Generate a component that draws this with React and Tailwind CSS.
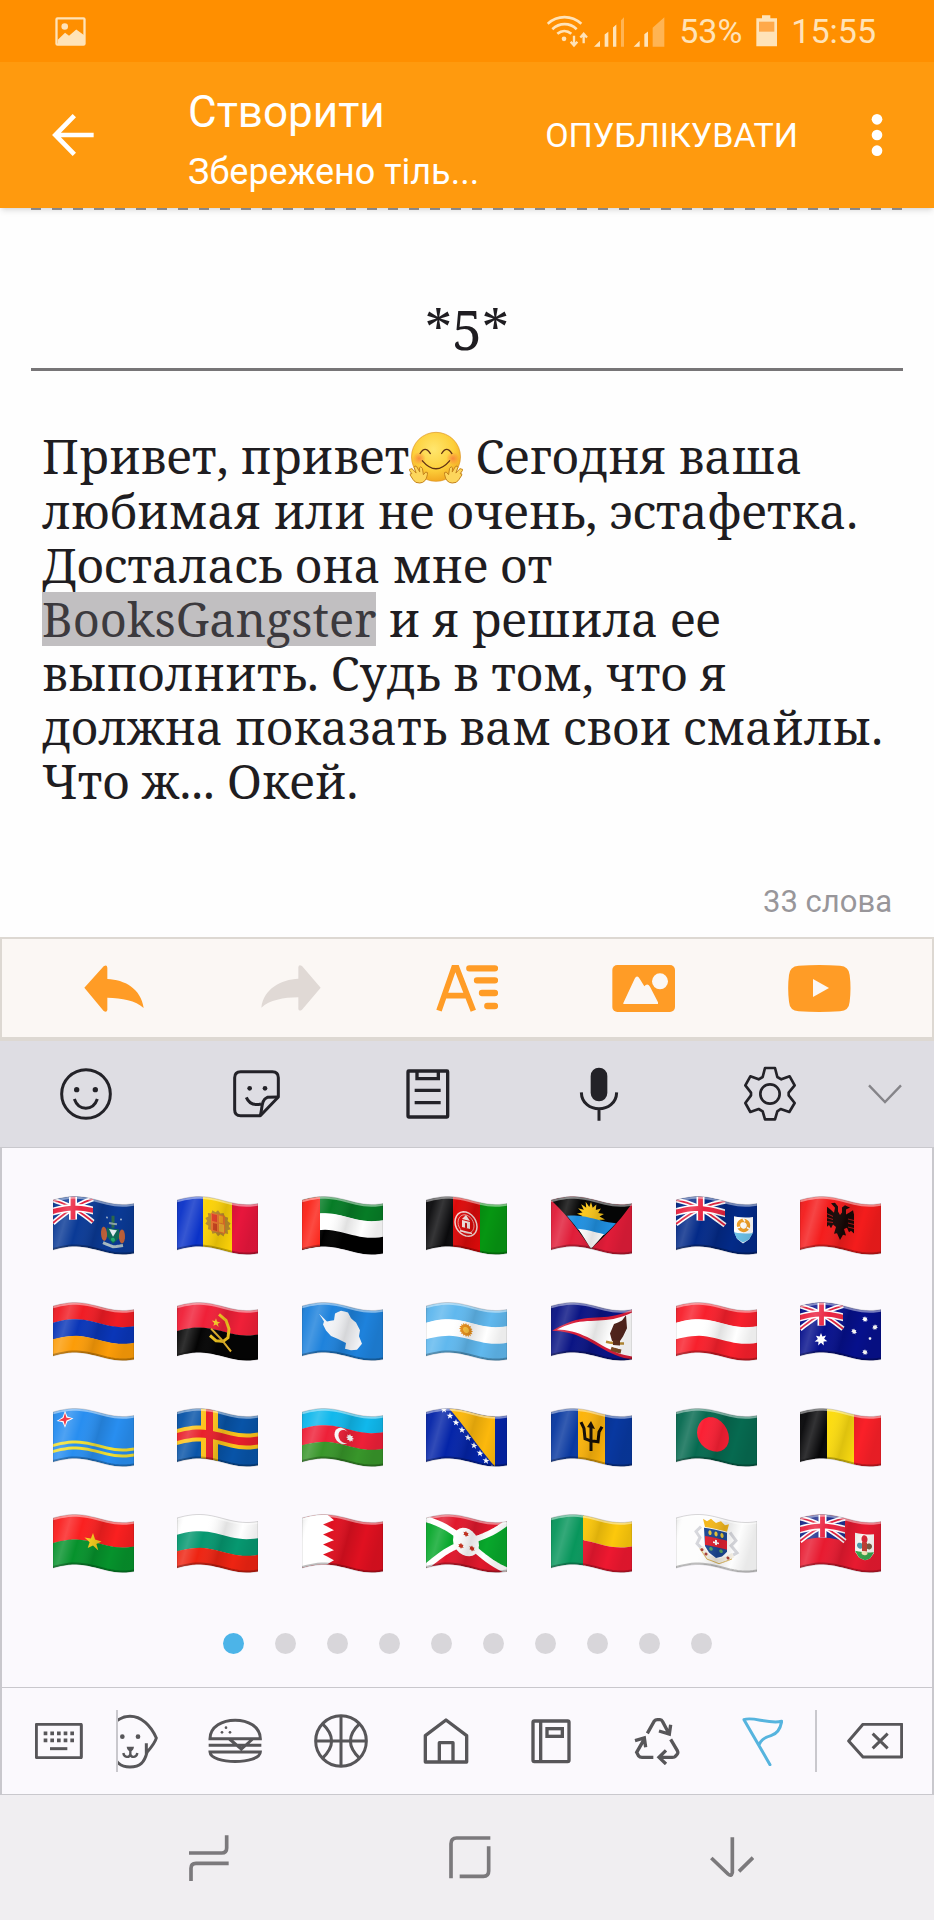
import { useState } from 'react'

/* ---------- waving flags ---------- */

const W = 81
const H = 50

// vertical displacement of the cloth at x
const lift = x => 4.5 - 4 * Math.cos((2 * Math.PI * (x - 22)) / 96)

function bend(points, closed = true) {
  const out = []
  const n = points.length
  const last = closed ? n : n - 1
  for (let i = 0; i < last; i++) {
    const [x1, y1] = points[i]
    const [x2, y2] = points[(i + 1) % n]
    const steps = Math.max(1, Math.ceil(Math.abs(x2 - x1) / 4))
    for (let s = 0; s < steps; s++) {
      const x = x1 + ((x2 - x1) * s) / steps
      const y = y1 + ((y2 - y1) * s) / steps
      out.push([x, y + lift(x)])
    }
  }
  if (!closed) out.push([points[n - 1][0], points[n - 1][1] + lift(points[n - 1][0])])
  return 'M' + out.map(([x, y]) => `${x.toFixed(2)} ${y.toFixed(2)}`).join('L') + (closed ? 'Z' : '')
}

const rect = (x, y, w, h, fill) => ({ d: bend([[x, y], [x + w, y], [x + w, y + h], [x, y + h]]), fill })
const poly = (points, fill) => ({ d: bend(points), fill })
const line = (points, stroke, width) => ({ d: bend(points, false), fill: 'none', stroke, strokeWidth: width })

function oval(x, y, rx, ry, fill, stroke, strokeWidth) {
  const pts = []
  for (let i = 0; i < 24; i++) {
    const a = (i * Math.PI) / 12
    pts.push([x + rx * Math.cos(a), y + ry * Math.sin(a)])
  }
  return { d: bend(pts), fill, stroke, strokeWidth }
}

function star(x, y, r, fill, n = 5, inner = 0.4) {
  const pts = []
  for (let i = 0; i < n * 2; i++) {
    const a = (i * Math.PI) / n - Math.PI / 2
    const k = i % 2 ? r * inner : r
    pts.push([x + k * Math.cos(a), y + k * Math.sin(a)])
  }
  return poly(pts, fill)
}

const rows = (...colors) => colors.map((c, i) => rect(0, (i * H) / colors.length, W, H / colors.length + 0.3, c))
const cols = (...colors) => colors.map((c, i) => rect((i * W) / colors.length, 0, W / colors.length + 0.3, H, c))

const jack = (w, h, blue) => [
  rect(0, 0, w, h, blue),
  line([[0, 0], [w, h]], '#fff', 5),
  line([[0, h], [w, 0]], '#fff', 5),
  line([[0, 0], [w, h]], '#e0203c', 1.8),
  line([[0, h], [w, 0]], '#e0203c', 1.8),
  rect(w / 2 - 4, 0, 8, h, '#fff'),
  rect(0, h / 2 - 4, w, 8, '#fff'),
  rect(w / 2 - 2.4, 0, 4.8, h, '#ea2340'),
  rect(0, h / 2 - 2.4, w, 4.8, '#ea2340'),
]

const FLAGS = [
  {
    name: 'Ascension Island',
    parts: [
      rect(0, 0, W, H, '#0a3a96'), ...jack(40, 23, '#0a3a96'),
      oval(51, 32, 3, 7, '#c4643c'), oval(69, 32, 3, 7, '#c4643c'),
      poly([[54, 25], [66, 25], [66, 34], [60, 40], [54, 34]], '#0f6a58'),
      poly([[56, 26], [64, 26], [60, 33]], '#e6ecf2'),
      line([[60, 24], [60, 12]], '#2d6a4c', 3), line([[56, 20], [64, 20]], '#8aa3a8', 2),
      line([[50, 41], [60, 43], [70, 41]], '#a9bcc4', 3),
      oval(60, 36, 2, 2, '#22ad70'), oval(54, 15, 1, 1, '#9fb4d0'), oval(68, 15, 1, 1, '#9fb4d0'),
    ],
  },
  {
    name: 'Andorra',
    parts: [
      rect(0, 0, 26, H, '#0a32c8'), rect(26, 0, 29, H, '#fcd208'), rect(55, 0, 26, H, '#e8163c'),
      star(41, 24, 13, '#b98a2c', 14, 0.82), rect(34, 15, 14, 18, '#e8742c'),
      rect(35, 16, 5, 7, '#e23c28'), rect(42, 24, 5, 8, '#f0b030'), rect(36, 25, 4, 7, '#c8401c'), rect(42, 16, 4, 7, '#f6a020'),
    ],
  },
  {
    name: 'United Arab Emirates',
    parts: [...rows('#067c26', '#ffffff', '#000000'), rect(0, 0, 18, H, '#fb2318')],
  },
  {
    name: 'Afghanistan',
    parts: [
      ...cols('#0a0a0c', '#dc0a0a', '#069612'),
      oval(40, 25, 11, 12, 'none', '#f6d6d2', 1.5), oval(40, 25, 8, 9, 'none', '#f2c5c0', 0.8),
      rect(36, 22, 8, 7, '#f6e6e2'), poly([[36, 21], [40, 16], [44, 21]], '#f6e6e2'), rect(39, 24, 2, 5, '#c81414'),
      line([[34, 33], [46, 33]], '#f6e6e2', 1.5),
    ],
  },
  {
    name: 'Antigua and Barbuda',
    parts: [
      rect(0, 0, W, H, '#e01c38'), poly([[0, 0], [W, 0], [40, 50]], '#050505'),
      star(40, 17, 14, '#fcc81c', 16, 0.62), poly([[16, 19], [65, 19], [53, 33], [27, 33]], '#2090e0'),
      poly([[27, 32], [53, 32], [40, 50]], '#fff'),
    ],
  },
  {
    name: 'Anguilla',
    parts: [
      rect(0, 0, W, H, '#032a88'), ...jack(49, 24, '#032a88'),
      poly([[58, 13], [77, 13], [77, 28], [73, 35], [67, 39], [61, 35], [58, 28]], '#fff'),
      poly([[58, 29], [77, 29], [73, 35], [67, 38], [61, 35]], '#6cc2ea'),
      oval(67.5, 21, 5, 5, 'none', '#f0a028', 3.4), oval(67.5, 21, 2, 2, '#fff'),
      line([[67, 14], [69, 17]], '#fff', 1.5), line([[61, 24], [64, 23]], '#fff', 1.5), line([[71, 23], [74, 25]], '#fff', 1.5),
    ],
  },
  {
    name: 'Albania',
    parts: [
      rect(0, 0, W, H, '#f41c1c'),
      poly([[31, 6], [35, 5], [38, 8], [38, 13], [40, 16], [42, 13], [42, 8], [45, 5], [50, 6], [46, 9], [46, 14], [53, 8], [54, 12], [54, 31], [51, 29], [49, 31], [47, 27], [44, 29], [46, 35], [43, 35], [40, 41], [37, 35], [34, 36], [36, 29], [33, 27], [31, 31], [29, 28], [27, 30], [27, 10], [34, 15], [35, 10]], '#170806'),
      line([[48, 18], [54, 18]], '#d41818', 0.8), line([[48, 22], [54, 22]], '#d41818', 0.8), line([[48, 26], [54, 26]], '#d41818', 0.8),
      line([[27, 17], [33, 19]], '#d41818', 0.8), line([[27, 21], [33, 22]], '#d41818', 0.8), line([[27, 25], [33, 25]], '#d41818', 0.8),
    ],
  },
  { name: 'Armenia', parts: rows('#f01c24', '#0a36b8', '#fc9c08') },
  {
    name: 'Angola',
    parts: [
      ...rows('#f02038', '#040404'),
      line([[42, 9], [49, 13], [52, 21], [51, 30], [46, 35], [39, 36], [33, 32]], '#f6c820', 3),
      line([[34, 25], [44, 33], [54, 43]], '#e6b42c', 2), star(39, 18, 4.5, '#fccc28'),
    ],
  },
  {
    name: 'Antarctica',
    parts: [
      rect(0, 0, W, H, '#1e82dc'),
      poly([[17, 11], [22, 16], [25, 19], [32, 17], [33, 10], [39, 6], [46, 6], [49, 11], [54, 14], [58, 21], [57, 27], [60, 34], [55, 41], [49, 43], [43, 43], [44, 37], [36, 35], [29, 33], [24, 28], [21, 22], [22, 19]], '#f2f3f6'),
    ],
  },
  {
    name: 'Argentina',
    parts: [...rows('#60b8ee', '#fff', '#60b8ee'), star(40, 25, 7, '#e8901c', 16, 0.75), oval(40, 25, 3, 3, '#fcc23c')],
  },
  {
    name: 'American Samoa',
    parts: [
      rect(0, 0, W, H, '#0a1484'), poly([[1, 25], [81, 0], [81, 50]], '#d81c38'),
      poly([[6, 25], [40, 16], [81, 3], [81, 47], [40, 34]], '#fff'),
      poly([[75, 5], [71, 10], [63, 14], [59, 24], [61, 31], [68, 32], [72, 26], [76, 18]], '#50241c'),
      line([[55, 33], [73, 33]], '#b88c34', 2.5), line([[60, 39], [70, 41]], '#7c4c24', 4), rect(62, 30, 7, 5, '#5c301c'),
    ],
  },
  { name: 'Austria', parts: rows('#f8202c', '#fff', '#f8202c') },
  {
    name: 'Australia',
    parts: [
      rect(0, 0, W, H, '#06108c'), ...jack(43, 23, '#06108c'), star(21, 37, 6.5, '#fff', 7, 0.5),
      star(65, 9, 3, '#fff', 7, 0.6), star(54, 23, 3, '#fff', 7, 0.6), star(75, 17, 3, '#fff', 7, 0.6),
      star(65, 42, 3, '#fff', 7, 0.6), star(70, 28, 1.8, '#fff', 5, 0.6),
    ],
  },
  {
    name: 'Aruba',
    parts: [
      rect(0, 0, W, H, '#288ef0'), rect(0, 32, W, 3, '#f2e034'), rect(0, 38, W, 3, '#f2e034'),
      star(12, 10, 8.5, '#fff', 4, 0.4), star(12, 10, 6.5, '#f02030', 4, 0.32),
    ],
  },
  {
    name: 'Aland Islands',
    parts: [
      rect(0, 0, W, H, '#0854a8'), rect(24, 0, 17, H, '#fcc41c'), rect(0, 17, W, 16, '#fcc41c'),
      rect(29, 0, 7, H, '#e8202c'), rect(0, 21, W, 8, '#e8202c'),
    ],
  },
  {
    name: 'Azerbaijan',
    parts: [
      ...rows('#10b8ec', '#ee2038', '#38962a'),
      oval(40, 25, 7.5, 8, '#fff'), oval(42.5, 25, 6, 6.5, '#ee2038'), star(48, 25, 4, '#fff', 8, 0.6),
    ],
  },
  {
    name: 'Bosnia and Herzegovina',
    parts: [
      rect(0, 0, W, H, '#0424a8'), poly([[23, 0], [69, 0], [69, 50]], '#fcb80c'),
      ...[0, 1, 2, 3, 4, 5, 6, 7, 8].map(i => star(18 + i * 6, 1 + i * 6.3, 3.6, '#fff')),
    ],
  },
  {
    name: 'Barbados',
    parts: [
      ...cols('#0838a0', '#fcb40c', '#0838a0'),
      line([[30, 13], [33, 19], [34, 29], [40, 30], [47, 29], [48, 19], [51, 13]], '#140c04', 3),
      line([[40, 14], [40, 40]], '#140c04', 3), poly([[36, 17], [40, 10], [44, 17]], '#140c04'),
    ],
  },
  { name: 'Bangladesh', parts: [rect(0, 0, W, H, '#066a50'), oval(37, 24, 16, 17, '#fa2034')] },
  { name: 'Belgium', parts: cols('#060608', '#fcdc10', '#fa2028') },
  { name: 'Burkina Faso', parts: [...rows('#fa2020', '#06922c'), star(40, 25, 9, '#fcd01c')] },
  { name: 'Bulgaria', parts: rows('#fff', '#069870', '#ee2412') },
  {
    name: 'Bahrain',
    parts: [
      rect(0, 0, W, H, '#e01020'),
      poly([[0, 0], [25, 0], [32, 5], [21, 10], [32, 15], [21, 20], [32, 25], [21, 30], [32, 35], [21, 40], [32, 45], [25, 50], [0, 50]], '#fff'),
    ],
  },
  {
    name: 'Burundi',
    parts: [
      rect(0, 0, W, H, '#e0182c'), poly([[0, 0], [40, 25], [0, 50]], '#08a82c'), poly([[W, 0], [40, 25], [W, 50]], '#08a82c'),
      line([[0, 1], [W, 49]], '#fff', 6), line([[0, 49], [W, 1]], '#fff', 6), oval(40, 25, 13, 14, '#fff'),
      star(40, 17, 3, '#c8301c', 6, 0.6), star(35, 30, 3, '#c8301c', 6, 0.6), star(46, 30, 3, '#c8301c', 6, 0.6),
    ],
  },
  {
    name: 'Benin',
    parts: [rect(0, 0, 33, H, '#08965c'), rect(32, 0, 49, 25, '#fcc80c'), rect(32, 25, 49, 25, '#ee1830')],
  },
  {
    name: 'Saint Barthelemy',
    parts: [
      rect(0, 0, W, H, '#fdfdfd'),
      line([[25, 12], [20, 17], [24, 23], [21, 29], [25, 33]], '#d4d5da', 3),
      line([[54, 12], [60, 19], [55, 25], [61, 31], [57, 34]], '#d4d5da', 3),
      line([[25, 33], [32, 42], [42, 44], [51, 39], [57, 34]], '#f2ede2', 5),
      line([[24, 34], [31, 44], [43, 46], [56, 38]], '#d8b45c', 1),
      poly([[28, 13], [51, 13], [51, 32], [46, 38], [40, 41], [33, 37], [29, 31]], '#1c4894'),
      rect(29, 21, 22, 9, '#e02030'), rect(39, 23, 2, 5, '#fff'), rect(37, 25, 6, 1.6, '#fff'),
      poly([[27, 4], [31, 6], [35, 3], [40, 6], [45, 3], [49, 6], [53, 4], [51, 12], [29, 12]], '#f4b81c'),
      oval(34, 17, 1.6, 2.4, '#ecc838'), oval(40, 17, 1.6, 2.4, '#ecc838'), oval(46, 17, 1.6, 2.4, '#ecc838'),
      oval(35, 33, 1.8, 1.8, '#58a860'), oval(45, 33, 1.8, 1.8, '#58a860'),
      oval(26, 35, 1.5, 1.5, '#a83c34'), oval(30, 39, 1.5, 1.5, '#a83c34'), oval(52, 38, 1.5, 1.5, '#a83c34'),
    ],
  },
  {
    name: 'Bermuda',
    parts: [
      rect(0, 0, W, H, '#e81a30'), ...jack(45, 23, '#1c2c8c'),
      poly([[55, 12], [74, 12], [74, 31], [70, 36], [65, 38], [59, 36], [55, 31]], '#f8f8f4'),
      poly([[55, 30], [74, 30], [70, 36], [65, 38], [59, 36]], '#38a44c'),
      oval(64.5, 17, 3, 4, '#d82838'), oval(60, 24, 3, 3, '#4c9cac'), oval(69, 24, 3, 3, '#7c5c44'),
      rect(62, 20, 5, 9, '#c04034'), oval(64.5, 31, 3, 2, '#f4e8b8'),
    ],
  },
]

const OUTLINE = bend([[0, 0], [W, 0], [W, H], [0, H]])
const TOP_EDGE = bend([[0, 1], [W, 1]], false)
const BOTTOM_EDGE = bend([[0, H - 1], [W, H - 1]], false)

function FlagDefs() {
  return (
    <svg className="absolute h-0 w-0" aria-hidden="true">
      <defs>
        <clipPath id="cloth"><path d={OUTLINE} /></clipPath>
        <linearGradient id="folds" x1="0" x2="1" y1="0" y2="0.2">
          <stop offset="0" stopColor="#000" stopOpacity="0.12" />
          <stop offset="0.1" stopColor="#fff" stopOpacity="0.04" />
          <stop offset="0.22" stopColor="#fff" stopOpacity="0.18" />
          <stop offset="0.38" stopColor="#fff" stopOpacity="0" />
          <stop offset="0.62" stopColor="#000" stopOpacity="0.12" />
          <stop offset="0.82" stopColor="#000" stopOpacity="0" />
          <stop offset="1" stopColor="#000" stopOpacity="0.08" />
        </linearGradient>
      </defs>
    </svg>
  )
}

function Flag({ parts }) {
  return (
    <svg width="81" height="60" viewBox="0 0 81 60">
      <g clipPath="url(#cloth)">
        {parts.map((p, i) => <path key={i} {...p} />)}
        <path d={OUTLINE} fill="url(#folds)" />
        <path d={TOP_EDGE} fill="none" stroke="#fff" strokeOpacity="0.45" strokeWidth="2.5" />
        <path d={BOTTOM_EDGE} fill="none" stroke="#000" strokeOpacity="0.25" strokeWidth="2" />
      </g>
      <path d={OUTLINE} fill="none" stroke="#000" strokeOpacity="0.25" strokeWidth="0.6" />
    </svg>
  )
}

/* ---------- icons ---------- */

const Icon = ({ w, h, box, children, ...rest }) => (
  <svg width={w} height={h} viewBox={box} fill="none" stroke="currentColor" strokeWidth="9" className="shrink-0" {...rest}>
    {children}
  </svg>
)

const PictureIcon = () => (
  <Icon w={31} h={29} box="164 48 93 88" strokeWidth="7">
    <rect x="168" y="52" width="85" height="80" rx="3" />
    <circle cx="193" cy="77" r="10" fill="currentColor" stroke="none" />
    <path d="M172 117l22-21 12 9 22-19 24 17v30h-80z" fill="currentColor" stroke="none" />
  </Icon>
)

const SignalIcons = () => (
  <Icon w={118} h={33} box="240 42 354 98" strokeWidth="8">
    <path d="M242 68c29-27 72-27 101 0M256 84c22-20 52-20 73 0M271 98c13-11 29-11 42 0" />
    <circle cx="291" cy="113" r="7" fill="currentColor" stroke="none" />
    <path d="M321 104v28M311 122l10 11 10-11M350 126V99M340 109l10-11 10 11" strokeWidth="7" />
    <path d="M381 137l18-18v18zM413 100l11-8v45h-11zM438 79l10-9v67h-10zM500 137l18-18v18zM532 99l11-8v46h-11z" fill="currentColor" stroke="none" />
    <path d="M462 57l9-9v89h-9zM557 80l35-32v89h-35z" fill="currentColor" fillOpacity="0.45" stroke="none" />
  </Icon>
)

const BatteryIcon = () => (
  <Icon w={21} h={32} box="874 46 63 96">
    <path d="M892 47h25v9h20v84h-62V56h17z" fill="currentColor" stroke="none" />
    <path d="M883 66h46v30h-46z" fill="#ffa94a" stroke="none" />
  </Icon>
)

const BackIcon = () => (
  <Icon w={42} h={42} box="156 342 126 126" strokeWidth="14">
    <path d="M281 405H168M223 347l-57 58 57 58" />
  </Icon>
)

const MoreIcon = () => (
  <Icon w={12} h={42} box="1212 342 36 126" fill="currentColor" stroke="none">
    <circle cx="1230" cy="358" r="16" /><circle cx="1230" cy="405" r="16" /><circle cx="1230" cy="452" r="16" />
  </Icon>
)

const UndoIcon = () => (
  <Icon w={60} h={47} box="253 346 180 141" fill="currentColor" stroke="none">
    <path d="M254 414l58-64q10-7 11 4v34c52 2 101 29 109 87-24-23-65-29-109-31v37q-2 9-11 3z" />
  </Icon>
)

const RedoIcon = () => (
  <Icon w={60} h={47} box="782 346 180 141" fill="currentColor" stroke="none">
    <path d="M961 414l-56-65q-10-6-11 4v34c-52 2-104 30-111 87 24-22 67-31 111-31v35q2 8 11 2z" />
  </Icon>
)

const FormatIcon = () => (
  <Icon w={62} h={47} box="1308 345 186 141">
    <path d="M1317 482l45-129h8l50 129M1332 437h70" strokeWidth="17" />
    <path d="M1408 355h77M1431 391h54M1446 429h39M1462 468h23" strokeWidth="19" strokeLinecap="round" />
  </Icon>
)

const ImageIcon = () => (
  <Icon w={63} h={47} box="434 345 189 141" fill="currentColor" stroke="none">
    <rect x="435" y="345" width="188" height="141" rx="15" />
    <path d="M468 459l34-73q7-13 15 0l14 23q9-11 17 1l24 47v5H468z" fill="#fbf7f4" />
    <circle cx="578" cy="394" r="24" fill="#fbf7f4" />
  </Icon>
)

const VideoIcon = () => (
  <Icon w={63} h={47} box="965 345 189 141" fill="currentColor" stroke="none">
    <path d="M997 347q62-4 124 0 27 2 29 28 5 40 0 80-2 27-29 29-62 4-124 0-27-2-29-29-5-40 0-80 2-26 29-28z" />
    <path d="M1040 387l48 27-48 27z" fill="#fbf7f4" />
  </Icon>
)

const SmileIcon = () => (
  <Icon w={52} h={52} box="179 651 156 156">
    <circle cx="257" cy="729" r="73" />
    <circle cx="229" cy="716" r="8" fill="currentColor" stroke="none" /><circle cx="285" cy="716" r="8" fill="currentColor" stroke="none" />
    <path d="M222 744c13 37 56 37 69 0" />
  </Icon>
)

const StickerIcon = () => (
  <Icon w={47} h={48} box="699 658 141 144">
    <path d="M722 663h95q18 0 18 18v58l-54 56h-59q-18 0-18-18v-96q0-18 18-18z" strokeLinejoin="round" />
    <path d="M781 795c7-26 2-47 21-55l33-1M739 740c9 22 27 24 44 20" />
    <circle cx="749" cy="713" r="7" fill="currentColor" stroke="none" /><circle cx="795" cy="713" r="7" fill="currentColor" stroke="none" />
  </Icon>
)

const ClipboardIcon = () => (
  <Icon w={44} h={50} box="1219 655 132 150" strokeWidth="10">
    <rect x="1225" y="661" width="119" height="138" rx="2" />
    <path d="M1252 661v23h64v-23M1245 719h78M1245 756h78" />
  </Icon>
)

const MicIcon = () => (
  <Icon w={40} h={54} box="337 648 120 162">
    <rect x="372" y="650" width="50" height="101" rx="25" fill="currentColor" stroke="none" />
    <path d="M344 724c2 66 104 66 106 0M397 774v35" />
  </Icon>
)

const GearIcon = () => (
  <Icon w={54} h={56} box="830 646 162 168" strokeWidth="8" strokeLinejoin="round">
    <path d="M896 652h30l7 27 12 7 25-9 15 27-18 22v8l18 23-16 27-26-9-10 7-7 24h-30l-7-24-12-7-25 9-15-27 17-23v-8l-17-22 15-27 25 9 12-7z" />
    <circle cx="911" cy="730" r="29" />
  </Icon>
)

const ChevronIcon = () => (
  <Icon w={34} h={20} box="1202 702 102 60" strokeWidth="7"><path d="M1205 706l48 50 48-50" /></Icon>
)

const KeyboardIcon = () => (
  <Icon w={48} h={36} box="104 159 144 108">
    <rect x="108" y="163" width="135" height="100" rx="2" />
    <path d="M130 190h92M130 211h92" strokeWidth="11" strokeDasharray="11 9" />
    <path d="M149 236h52" />
  </Icon>
)

const DogIcon = () => (
  <Icon w={56} h={55} box="302 130 168 165">
    <path d="M386 137c34 0 62 27 79 65-3 12-10 22-28 43-8 30-20 44-51 44M386 137c-34 0-62 27-79 65 3 12 10 22 28 43 8 30 20 44 51 44M435 218v33M337 218v33" />
    <circle cx="363" cy="198" r="7" fill="currentColor" stroke="none" /><circle cx="410" cy="198" r="7" fill="currentColor" stroke="none" />
    <path d="M376 228h22q-2 13-11 14-9-1-11-14z" fill="currentColor" stroke="none" />
    <path d="M387 238v15M366 247c2 14 18 15 21 4 3 11 19 10 21-4" strokeWidth="7" />
  </Icon>
)

const BurgerIcon = () => (
  <Icon w={54} h={48} box="622 141 162 144">
    <path d="M628 206c1-74 150-74 151 0zM624 226h158M628 246h151c-2 38-149 38-151 0zM686 207l36 30 34-30" />
    <circle cx="664" cy="187" r="4" fill="currentColor" stroke="none" /><circle cx="676" cy="173" r="4" fill="currentColor" stroke="none" /><circle cx="688" cy="187" r="4" fill="currentColor" stroke="none" />
  </Icon>
)

const BallIcon = () => (
  <Icon w={54} h={54} box="939 132 162 162">
    <circle cx="1020" cy="213" r="76" />
    <path d="M1020 137v152M944 213h152M964 161c37 35 37 69 0 104M1076 161c-37 35-37 69 0 104" />
  </Icon>
)

const HomeIcon = () => (
  <Icon w={46} h={46} box="1267 143 138 138">
    <path d="M1274 196l62-47 62 47v79h-124zM1316 275v-58h41v58" strokeWidth="10" strokeLinejoin="round" />
  </Icon>
)

const BookIcon = () => (
  <Icon w={40} h={45} box="191 145 120 135" strokeWidth="10">
    <rect x="197" y="151" width="108" height="122" rx="4" />
    <path d="M220 151v122" /><rect x="239" y="174" width="46" height="23" />
  </Icon>
)

const RecycleIcon = () => (
  <Icon w={46} h={47} box="499 142 138 141" strokeWidth="10">
    <path d="M539 188l21-37q3-4 9-4h8q5 0 8 6l19 36M574 181l31 9 4-28M609 206l20 34q3 6 0 10l-6 7q-2 3-9 3h-38M595 239l-21 21 21 20M557 260h-34q-7 0-10-4l-6-11 24-42M534 230l-4-28-28 8" />
  </Icon>
)

const PennantIcon = () => (
  <Icon w={41} h={50} box="823 136 123 150" strokeLinecap="round" strokeLinejoin="round">
    <path d="M907 282l-78-135c26-11 70 14 113 5-3 19-10 36-32 43-20 6-31 13-35 26" />
  </Icon>
)

const BackspaceIcon = () => (
  <Icon w={56} h={36} box="1142 159 168 108" strokeLinejoin="round">
    <path d="M1190 163h116v98h-116l-43-48zM1219 191l45 44M1264 191l-45 44" />
  </Icon>
)

const RecentsIcon = () => (
  <Icon w={40} h={46} box="567 491 120 138" strokeWidth="11">
    <path d="M680 492v38q0 15-15 15h-98M573 629v-38q0-15 15-15h98" />
  </Icon>
)

const HomeKeyIcon = () => (
  <Icon w={42} h={43} box="1346 497 126 129" strokeWidth="11">
    <path d="M1352 624V520q0-17 17-17h101M1465 528v74q0 16-16 16h-71" />
  </Icon>
)

const HideIcon = () => (
  <Icon w={44} h={42} box="729 500 132 126" strokeWidth="11">
    <path d="M796 501v106q-3 13-13 4l-50-48M858 562l-42 41" />
  </Icon>
)

function HugEmoji() {
  return (
    <svg width="54" height="53" viewBox="1224 452 162 160" className="inline-block align-[-10px]" role="img" aria-label="hug">
      <defs>
        <radialGradient id="face" cx="0.45" cy="0.35" r="0.7">
          <stop offset="0" stopColor="#ffe66e" /><stop offset="0.6" stopColor="#fdcf3a" /><stop offset="1" stopColor="#f0a01c" />
        </radialGradient>
        <radialGradient id="blush">
          <stop offset="0" stopColor="#f8743c" stopOpacity="0.75" /><stop offset="1" stopColor="#f8743c" stopOpacity="0" />
        </radialGradient>
      </defs>
      <circle cx="1305" cy="530" r="74" fill="url(#face)" stroke="#dc9220" strokeWidth="2" />
      <circle cx="1254" cy="535" r="20" fill="url(#blush)" /><circle cx="1356" cy="535" r="20" fill="url(#blush)" />
      <path d="M1257 520q15-25 31 0M1322 520q15-25 31 0M1264 542q41 48 82 0" fill="none" stroke="#613214" strokeWidth="4" strokeLinecap="round" />
      {['', 'translate(2610 0) scale(-1 1)'].map(t => (
        <path key={t} transform={t || undefined}
          d="M1228 567q4-4 9 3l8 9-6-17q1-8 8-2l9 16-1-13q4-7 9 2l3 19 7-8q8-1 5 8-4 24-23 25-14 1-20-10l-9-14q-1-6 5-4l-7-10q-1-5 3-4z"
          fill="#fdd65c" stroke="#c4821c" strokeWidth="3" />
      ))}
    </svg>
  )
}

/* ---------- page ---------- */

const EDIT_TOOLS = [
  { label: 'Скасувати', icon: UndoIcon },
  { label: 'Повторити', icon: RedoIcon, disabled: true },
  { label: 'Формат', icon: FormatIcon },
  { label: 'Зображення', icon: ImageIcon },
  { label: 'Відео', icon: VideoIcon },
]

const KEYBOARD_TOOLS = [
  { label: 'Смайли', icon: SmileIcon },
  { label: 'Наліпки', icon: StickerIcon },
  { label: 'Буфер обміну', icon: ClipboardIcon },
  { label: 'Голос', icon: MicIcon },
  { label: 'Налаштування', icon: GearIcon },
]

const CATEGORIES = [
  { label: 'Тварини', icon: DogIcon },
  { label: 'Їжа', icon: BurgerIcon },
  { label: 'Спорт', icon: BallIcon },
  { label: 'Місця', icon: HomeIcon },
  { label: 'Предмети', icon: BookIcon },
  { label: 'Символи', icon: RecycleIcon },
  { label: 'Прапори', icon: PennantIcon },
]

function Header() {
  return (
    <header className="relative z-10 bg-[#ff9a0e] text-white shadow-md">
      <div className="flex h-[62px] items-center bg-[#ff8f00] pl-[55px] pr-[58px] text-[34px] leading-none text-[#ffe3b8]">
        <PictureIcon />
        <div className="ml-auto flex items-center gap-[14px]">
          <SignalIcons />
          <span>53%</span>
          <BatteryIcon />
          <span>15:55</span>
        </div>
      </div>
      <div className="flex h-[146px] items-center pl-[52px] pr-[51px]">
        <button type="button" aria-label="Назад"><BackIcon /></button>
        <div className="ml-[94px] min-w-0 flex-1 pt-[14px]">
          <h1 className="text-[44px] leading-[60px]">Створити</h1>
          <p className="text-[36px] leading-[60px]">Збережено тіль...</p>
        </div>
        <button type="button" className="text-[34px] leading-none">ОПУБЛІКУВАТИ</button>
        <button type="button" aria-label="Ще" className="ml-[73px]"><MoreIcon /></button>
      </div>
    </header>
  )
}

function Editor() {
  const [title, setTitle] = useState('*5*')

  return (
    <main className="bg-[#fefefe] px-[31px] font-['Noto_Serif','DejaVu_Serif_Condensed','DejaVu_Serif',serif] text-[#1f1d21]">
      <div className="h-[2px] bg-[repeating-linear-gradient(90deg,#9a9799_0_10px,transparent_10px_21px)]" />
      <input
        aria-label="Заголовок"
        value={title}
        onChange={e => setTitle(e.target.value)}
        className="mt-[79px] block h-[82px] w-full border-b-[3px] border-[#777577] bg-transparent text-center text-[54px] outline-none"
      />
      <div
        role="textbox"
        aria-label="Текст"
        contentEditable
        suppressContentEditableWarning
        spellCheck={false}
        className="mt-[58px] min-h-[446px] whitespace-nowrap pl-[11px] text-[47px] leading-[54px] outline-none"
      >
        Привет, привет<HugEmoji /> Сегодня ваша<br />
        любимая или не очень, эстафетка.<br />
        Досталась она мне от<br />
        <mark className="inline-block h-[54px] bg-[#c1bfc1] align-top text-[#3c3a3e]">BooksGangster</mark> и я решила ее<br />
        выполнить. Судь в том, что я<br />
        должна показать вам свои смайлы.<br />
        Что ж... Окей.
      </div>
      <p className="pb-[8px] pr-[11px] text-right font-['Roboto',sans-serif] text-[31px] leading-[54px] text-[#98969a]">33 слова</p>
    </main>
  )
}

export default function App() {
  const [page, setPage] = useState(0)
  const [category, setCategory] = useState('Прапори')

  return (
    <div className="flex min-h-screen flex-col bg-[#f0eef1] font-['Roboto','Noto_Sans',sans-serif]">
      <Header />
      <Editor />

      {/* Text tools */}
      <div className="grid h-[104px] grid-cols-5 border-2 border-b-4 border-[#ddd8d2] bg-[#fbf7f4] px-[24px]">
        {EDIT_TOOLS.map(t => (
          <button key={t.label} type="button" aria-label={t.label} disabled={t.disabled}
            className="flex items-center justify-center text-[#ff9c26] disabled:text-[#e0d9d5]">
            <t.icon />
          </button>
        ))}
      </div>

      {/* Keyboard tools */}
      <div className="flex h-[107px] border-b border-[#c9c8cd] bg-[#dedde3] text-[#232228]">
        <div className="grid flex-1 grid-cols-5">
          {KEYBOARD_TOOLS.map(t => (
            <button key={t.label} type="button" aria-label={t.label} className="flex items-center justify-center">
              <t.icon />
            </button>
          ))}
        </div>
        <button type="button" aria-label="Згорнути" className="flex w-[79px] items-center justify-center pr-5 text-[#858489]">
          <ChevronIcon />
        </button>
      </div>

      {/* Flags */}
      <section className="border-x-2 border-[#c9c8cd] bg-[#fbf9fd] pb-[33px] pt-[25px]">
        <FlagDefs />
        <div className="grid grid-cols-7 px-[29px]">
          {FLAGS.map(f => (
            <button key={f.name} type="button" aria-label={f.name} className="flex h-[106px] items-center justify-center">
              <Flag parts={f.parts} />
            </button>
          ))}
        </div>
        <div className="mt-[36px] flex justify-center gap-[31px]">
          {Array.from({ length: 10 }, (_, i) => (
            <button key={i} type="button" aria-label={`Сторінка ${i + 1}`} onClick={() => setPage(i)}
              className={`size-[21px] rounded-full ${i === page ? 'bg-[#4cb4e8]' : 'bg-[#d8d6da]'}`} />
          ))}
        </div>
      </section>

      {/* Categories */}
      <div className="flex h-[108px] items-center border-x-2 border-y border-[#c9c8cd] bg-[#fbf9fd] text-[#575659]">
        <button type="button" aria-label="Клавіатура" className="flex w-[114px] justify-center"><KeyboardIcon /></button>
        <div className="flex h-[62px] min-w-0 flex-1 justify-end overflow-hidden border-x-2 border-[#c9c8cd]">
          <div className="grid w-[738px] shrink-0 grid-cols-7">
            {CATEGORIES.map(c => (
              <button key={c.label} type="button" aria-label={c.label} onClick={() => setCategory(c.label)}
                className={`flex items-center justify-center ${c.label === category ? 'text-[#56b4de]' : ''}`}>
                <c.icon />
              </button>
            ))}
          </div>
        </div>
        <button type="button" aria-label="Стерти" className="flex w-[115px] justify-center"><BackspaceIcon /></button>
      </div>

      {/* System navigation */}
      <nav className="grid h-[125px] grid-cols-3 pl-[78px] pr-[71px] text-[#7b797c]">
        <button type="button" aria-label="Останні" className="flex items-center justify-center"><RecentsIcon /></button>
        <button type="button" aria-label="Головна" className="flex items-center justify-center"><HomeKeyIcon /></button>
        <button type="button" aria-label="Сховати" className="flex items-center justify-center"><HideIcon /></button>
      </nav>
    </div>
  )
}
